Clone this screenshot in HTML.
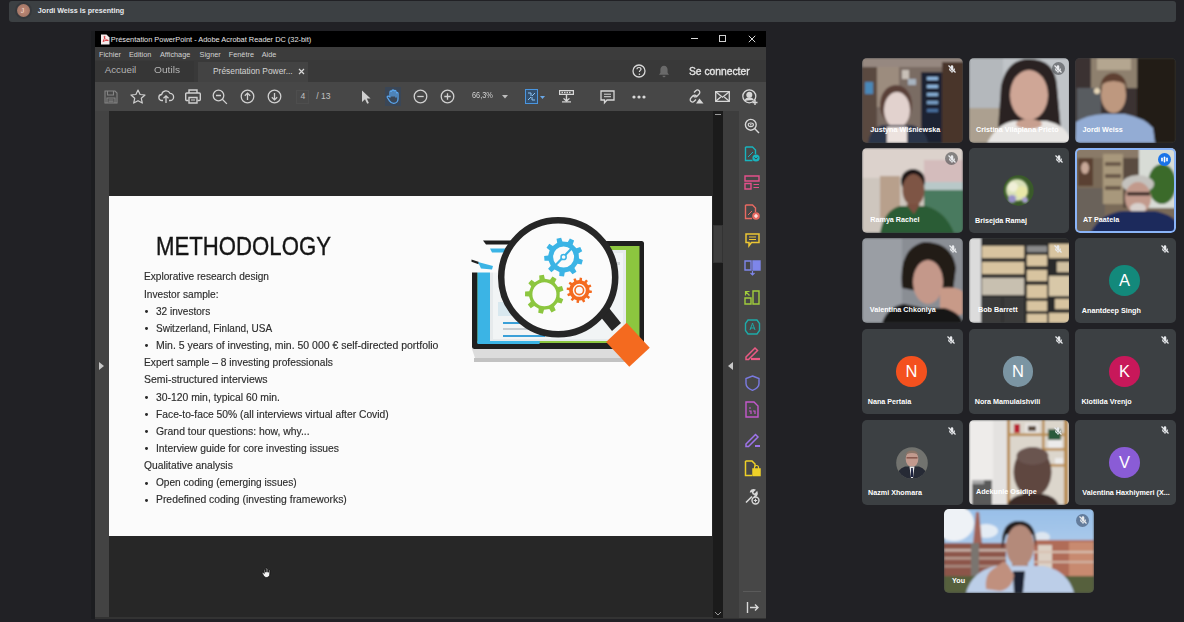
<!DOCTYPE html>
<html><head><meta charset="utf-8">
<style>
*{margin:0;padding:0;box-sizing:border-box}
html,body{width:1184px;height:622px;overflow:hidden;background:#212125;font-family:"Liberation Sans",sans-serif;position:relative}
.a{position:absolute}
.t{position:absolute;white-space:nowrap;line-height:1;transform-origin:0 50%}
.st{color:#2c2c2c;font-size:10.6px;-webkit-text-stroke:0.15px #2c2c2c}
.mt{color:#d2d2d2;font-size:8px}
.tile{position:absolute;width:101px;height:85px;background:#3c4043;border-radius:5px;overflow:hidden}
.nm{position:absolute;color:#fff;font-size:7.2px;font-weight:bold;white-space:nowrap;line-height:1}
.av{position:absolute;border-radius:50%;color:#fff;text-align:center}
svg{position:absolute;overflow:visible}
</style></head><body>
<!-- banner -->
<div class="a" style="left:9px;top:1px;width:1167px;height:21px;background:#3c4043;border-radius:3px"></div>
<!-- ACROBAT WINDOW -->
<div class="a" style="left:95px;top:31px;width:671px;height:16px;background:#000"></div>
<div class="a" style="left:95px;top:47px;width:671px;height:13px;background:#3c3c3c"></div>
<div class="a" style="left:95px;top:60px;width:671px;height:22px;background:#393939"></div>
<div class="a" style="left:95px;top:60.5px;width:98.5px;height:21px;background:#363636"></div>
<div class="a" style="left:198px;top:61.5px;width:110px;height:20.5px;background:#434343"></div>
<div class="a" style="left:95px;top:82px;width:671px;height:29px;background:#474747"></div>
<div class="a" style="left:91px;top:31px;width:4px;height:588px;background:#1c1d20"></div>
<div class="a" style="left:95px;top:111px;width:14px;height:507px;background:#434343"></div>
<div class="a" style="left:109px;top:111px;width:604px;height:507px;background:#272727"></div>
<div class="a" style="left:95px;top:617px;width:671px;height:2px;background:#333"></div>
<div class="a" style="left:713px;top:111px;width:10px;height:507px;background:#1b1b1b"></div>
<div class="a" style="left:723px;top:111px;width:16px;height:507px;background:#3d3d3d"></div>
<div class="a" style="left:739px;top:111px;width:27px;height:507px;background:#474747"></div>
<!-- slide -->
<div class="a" style="left:108.5px;top:195.8px;width:603.5px;height:339.9px;background:#fbfbfb"></div>
<div class="t" style="left:156px;top:233.8px;font-size:25px;color:#151515;-webkit-text-stroke:0.35px #151515;transform:scaleX(0.887)">METHODOLOGY</div>
<div class="t st" style="left:144.4px;top:271.40px;transform:scaleX(0.956)">Explorative research design</div>
<div class="t st" style="left:144.4px;top:288.56px;transform:scaleX(0.959)">Investor sample:</div>
<div class="a" style="left:145.2px;top:310.14px;width:2.9px;height:2.9px;border-radius:50%;background:#2a2a2a"></div>
<div class="t st" style="left:156.0px;top:305.72px;transform:scaleX(0.948)">32 investors</div>
<div class="a" style="left:145.2px;top:327.30px;width:2.9px;height:2.9px;border-radius:50%;background:#2a2a2a"></div>
<div class="t st" style="left:156.0px;top:322.88px;transform:scaleX(0.944)">Switzerland, Finland, USA</div>
<div class="a" style="left:145.2px;top:344.46px;width:2.9px;height:2.9px;border-radius:50%;background:#2a2a2a"></div>
<div class="t st" style="left:156.0px;top:340.04px;transform:scaleX(0.989)">Min. 5 years of investing, min. 50 000 € self-directed portfolio</div>
<div class="t st" style="left:144.4px;top:357.20px;transform:scaleX(0.966)">Expert sample – 8 investing professionals</div>
<div class="t st" style="left:144.4px;top:374.36px;transform:scaleX(0.990)">Semi-structured interviews</div>
<div class="a" style="left:145.2px;top:395.94px;width:2.9px;height:2.9px;border-radius:50%;background:#2a2a2a"></div>
<div class="t st" style="left:156.0px;top:391.52px;transform:scaleX(0.979)">30-120 min, typical 60 min.</div>
<div class="a" style="left:145.2px;top:413.10px;width:2.9px;height:2.9px;border-radius:50%;background:#2a2a2a"></div>
<div class="t st" style="left:156.0px;top:408.68px;transform:scaleX(0.971)">Face-to-face 50% (all interviews virtual after Covid)</div>
<div class="a" style="left:145.2px;top:430.26px;width:2.9px;height:2.9px;border-radius:50%;background:#2a2a2a"></div>
<div class="t st" style="left:156.0px;top:425.84px;transform:scaleX(0.982)">Grand tour questions: how, why...</div>
<div class="a" style="left:145.2px;top:447.42px;width:2.9px;height:2.9px;border-radius:50%;background:#2a2a2a"></div>
<div class="t st" style="left:156.0px;top:443.00px;transform:scaleX(0.974)">Interview guide for core investing issues</div>
<div class="t st" style="left:144.4px;top:460.16px;transform:scaleX(0.973)">Qualitative analysis</div>
<div class="a" style="left:145.2px;top:481.74px;width:2.9px;height:2.9px;border-radius:50%;background:#2a2a2a"></div>
<div class="t st" style="left:156.0px;top:477.32px;transform:scaleX(0.955)">Open coding (emerging issues)</div>
<div class="a" style="left:145.2px;top:498.90px;width:2.9px;height:2.9px;border-radius:50%;background:#2a2a2a"></div>
<div class="t st" style="left:156.0px;top:494.48px;transform:scaleX(0.979)">Predefined coding (investing frameworks)</div>

<!--ILLUS--><svg width="1184" height="622" style="left:0;top:0" viewBox="0 0 1184 622">
<path d="M472 349 L633 349 L631 358 Q552 365 475 358 Z" fill="#dcdcdc"/>
<rect x="474" y="358" width="156" height="4" fill="#c2c2c2"/>
<rect x="472" y="241" width="172" height="108" rx="2.5" fill="#1f1f1f"/>
<rect x="477.5" y="246" width="162" height="97" fill="#8cc63f"/>
<rect x="477.5" y="246" width="62" height="97" fill="#3bb4e5"/>
<rect x="477.5" y="341" width="62" height="3" fill="#3bb4e5"/>
<rect x="490" y="250" width="136" height="91" fill="#e6eaec"/>
<rect x="493" y="253" width="130" height="86" fill="#f1f4f5"/>
<rect x="498" y="262" width="122" height="3" fill="#d3d8da"/>
<rect x="498" y="302" width="108" height="14" fill="#d8e8ef"/>
<rect x="503" y="322" width="42" height="2" fill="#3aa0d8"/>
<rect x="503" y="328" width="56" height="2" fill="#c6ccd0"/>
<rect x="503" y="335" width="42" height="2" fill="#3aa0d8"/>
<path d="M465 236 H515 L503 272.5 H465Z" fill="#fbfbfb"/>
<path d="M483 240.5 H512 V244.5 H486 Z" fill="#1f1f1f"/>
<path d="M490 248.5 H508 L506 252.5 H492Z" fill="#3bb4e5"/>
<path d="M471.5 259.5 L479 262 L478.5 264.3 L471.5 261.7Z" fill="#1f1f1f"/>
<path d="M478 262 L493 266 L492 269.5 L481 268.5Z" fill="#3bb4e5"/>
<path d="M597.5 313 L607 305.5 L621 323 L612 331Z" fill="#262626"/>
<g transform="translate(627.9 344.8) rotate(47)"><rect x="-17" y="-14" width="34" height="28" fill="#f46a1f"/></g>
<circle cx="558.2" cy="277.3" r="57" fill="#fbfbfb" stroke="#262626" stroke-width="6.5"/>
<path fill-rule="evenodd" fill="#3bb4e5" d="M579.02 258.55 L582.87 259.96 L581.59 264.53 L577.56 263.73 L574.42 268.10 L574.42 268.10 L576.46 271.66 L572.53 274.33 L569.97 271.13 L564.76 272.46 L564.75 272.46 L564.03 276.50 L559.30 276.02 L559.40 271.92 L554.55 269.58 L554.55 269.58 L551.40 272.21 L548.08 268.81 L550.79 265.73 L548.58 260.82 L548.58 260.82 L544.48 260.81 L544.12 256.07 L548.18 255.45 L549.64 250.27 L549.64 250.27 L546.50 247.63 L549.28 243.77 L552.78 245.90 L557.23 242.87 L557.23 242.87 L556.53 238.83 L561.13 237.66 L562.45 241.54 L567.80 242.08 L567.80 242.08 L569.86 238.53 L574.14 240.60 L572.65 244.42 L576.41 248.27 L576.41 248.27 L580.27 246.88 L582.22 251.21 L578.62 253.18 L579.02 258.55ZM553.10 257.00 a10.50 10.50 0 1 0 21.00 0 a10.50 10.50 0 1 0 -21.00 0Z"/>
<path fill="none" stroke="#3bb4e5" stroke-width="2.2" d="M555.2 265.6 L571.5 248.5"/>
<circle cx="563.6" cy="257" r="2.6" fill="#fbfbfb" stroke="#3bb4e5" stroke-width="1.5"/>
<path fill-rule="evenodd" fill="#8cc63f" d="M559.59 297.38 L563.28 299.17 L561.54 303.59 L557.62 302.39 L554.06 306.42 L554.06 306.42 L555.74 310.17 L551.56 312.44 L549.33 309.00 L544.01 309.80 L544.01 309.79 L542.88 313.74 L538.23 312.80 L538.73 308.73 L534.14 305.92 L534.14 305.92 L530.74 308.22 L527.78 304.50 L530.78 301.71 L529.07 296.60 L529.07 296.60 L524.99 296.18 L525.11 291.43 L529.21 291.22 L531.18 286.21 L531.18 286.21 L528.32 283.27 L531.47 279.70 L534.74 282.18 L539.47 279.60 L539.47 279.60 L539.18 275.51 L543.88 274.81 L544.79 278.81 L550.07 279.87 L550.07 279.87 L552.47 276.55 L556.53 279.03 L554.66 282.68 L558.02 286.89 L558.02 286.89 L561.99 285.89 L563.51 290.40 L559.73 292.00 L559.59 297.38ZM532.40 294.30 a12.00 12.00 0 1 0 24.00 0 a12.00 12.00 0 1 0 -24.00 0Z"/>
<path fill-rule="evenodd" fill="#f46a1f" d="M589.50 290.30 L591.99 290.80 L591.69 293.10 L589.15 292.94 L588.13 295.40 L588.13 295.40 L590.04 297.08 L588.63 298.92 L586.51 297.51 L584.40 299.13 L584.40 299.13 L585.21 301.54 L583.07 302.43 L581.94 300.15 L579.30 300.50 L579.30 300.50 L578.80 302.99 L576.50 302.69 L576.66 300.15 L574.20 299.13 L574.20 299.13 L572.52 301.04 L570.68 299.63 L572.09 297.51 L570.47 295.40 L570.47 295.40 L568.06 296.21 L567.17 294.07 L569.45 292.94 L569.10 290.30 L569.10 290.30 L566.61 289.80 L566.91 287.50 L569.45 287.66 L570.47 285.20 L570.47 285.20 L568.56 283.52 L569.97 281.68 L572.09 283.09 L574.20 281.47 L574.20 281.47 L573.39 279.06 L575.53 278.17 L576.66 280.45 L579.30 280.10 L579.30 280.10 L579.80 277.61 L582.10 277.91 L581.94 280.45 L584.40 281.47 L584.40 281.47 L586.08 279.56 L587.92 280.97 L586.51 283.09 L588.13 285.20 L588.13 285.20 L590.54 284.39 L591.43 286.53 L589.15 287.66 L589.50 290.30ZM572.80 290.30 a6.50 6.50 0 1 0 13.00 0 a6.50 6.50 0 1 0 -13.00 0Z"/>
<circle cx="579.3" cy="290.3" r="4.3" fill="none" stroke="#f46a1f" stroke-width="1.6"/>
</svg><!--/ILLUS-->
<!--CHROME--><!-- banner content -->
<div class="a" style="left:14.7px;top:2.4px;width:17px;height:17px;border-radius:50%;background:#35383c"></div><div class="a" style="left:16.7px;top:4.4px;width:13px;height:13px;border-radius:50%;background:radial-gradient(circle,#c08a78,#9a7060)"></div>
<div class="t" style="left:20.8px;top:7.2px;font-size:7px;color:#f4dcd4">J</div>
<div class="t" style="left:37.8px;top:8.1px;font-size:7.15px;font-weight:bold;color:#e8eaed">Jordi Weiss is presenting</div>
<!-- title bar -->
<svg width="10" height="11" style="left:99.5px;top:33.5px" viewBox="0 0 10 11"><path d="M1 0.5h5.5l3 3v7h-8.5z" fill="#f5ecec"/><path d="M3 7.5c1-2 2-4 1.8-5.2-.3-.8-1 .2-.3 1.5.6 1.3 2 2.6 3.3 2.8 1 .1.6-.6-.5-.5C5.8 6.3 4 7 3 7.5z" fill="none" stroke="#d2232a" stroke-width=".8"/></svg>
<div class="t" style="left:110.8px;top:35.7px;font-size:7.4px;color:#e6e6e6">Présentation PowerPoint - Adobe Acrobat Reader DC (32-bit)</div>
<div class="a" style="left:690.5px;top:37.8px;width:7.5px;height:1px;background:#d8d8d8"></div>
<div class="a" style="left:719px;top:35.2px;width:7px;height:6.5px;border:1px solid #d0d0d0"></div>
<svg width="8" height="8" style="left:747.5px;top:34.5px" viewBox="0 0 8 8"><path d="M.8.8l6.4 6.4M7.2.8L.8 7.2" stroke="#d8d8d8" stroke-width="1"/></svg>
<!-- menu -->
<div class="t mt" style="left:99px;top:50.5px;font-size:7.3px">Fichier</div>
<div class="t mt" style="left:129px;top:50.5px;font-size:7.3px">Edition</div>
<div class="t mt" style="left:160px;top:50.5px;font-size:7.3px">Affichage</div>
<div class="t mt" style="left:199.6px;top:50.5px;font-size:7.3px">Signer</div>
<div class="t mt" style="left:228.8px;top:50.5px;font-size:7.3px">Fenêtre</div>
<div class="t mt" style="left:261.7px;top:50.5px;font-size:7.3px">Aide</div>
<!-- tabs -->
<div class="t" style="left:104.7px;top:65.3px;font-size:9.8px;color:#b4b4b4">Accueil</div>
<div class="t" style="left:154px;top:65.3px;font-size:9.8px;color:#b4b4b4;transform:scaleX(1.04)">Outils</div>
<div class="t" style="left:213px;top:66.5px;font-size:8.4px;color:#d4d4d4">Présentation Power...</div>
<svg width="7" height="7" style="left:297.5px;top:67.5px" viewBox="0 0 7 7"><path d="M1 1l5 5M6 1L1 6" stroke="#d8d8d8" stroke-width="1.2"/></svg>
<svg width="14" height="14" style="left:631.7px;top:64.4px" viewBox="0 0 14 14"><circle cx="7" cy="7" r="6" fill="none" stroke="#d8d8d8" stroke-width="1.3"/><path d="M5 5.3c0-1.2.9-1.8 2-1.8s2 .7 2 1.7c0 1.2-1.6 1.3-1.6 2.8" fill="none" stroke="#d8d8d8" stroke-width="1.2"/><circle cx="7.4" cy="10.3" r=".8" fill="#d8d8d8"/></svg>
<svg width="12" height="13" style="left:657.7px;top:65px" viewBox="0 0 12 13"><path d="M6 .8c-2.3 0-3.6 1.8-3.6 4v3L1 9.8h10L9.6 7.8v-3C9.6 2.6 8.3.8 6 .8zM4.5 10.8a1.5 1.5 0 0 0 3 0z" fill="#6a6a6a"/></svg>
<div class="t" style="left:689px;top:66.5px;font-size:10.4px;color:#e4e4e4;-webkit-text-stroke:0.35px #e4e4e4;transform:scaleX(0.99)">Se connecter</div>
<!-- toolbar icons -->
<svg width="14" height="14" style="left:103.5px;top:89.5px" viewBox="0 0 14 14" fill="none" stroke="#858585" stroke-width="1.1"><path d="M1 1h10l2 2v10H1z"/><path d="M3.5 1v4h6V1M3 13V8h8v5M4.5 10h5M4.5 11.8h5"/></svg>
<svg width="16" height="15" style="left:130px;top:89px" viewBox="0 0 16 15" fill="none" stroke="#d0d0d0" stroke-width="1.2" stroke-linejoin="round"><path d="M8 1l2.1 4.5 4.9.5-3.7 3.3 1 4.8L8 11.7 3.7 14.1l1-4.8L1 6l4.9-.5z"/></svg>
<svg width="16" height="15" style="left:157.7px;top:89px" viewBox="0 0 16 15" fill="none" stroke="#d0d0d0" stroke-width="1.3"><path d="M5 11.5H4a3 3 0 0 1-.3-6A4.4 4.4 0 0 1 12 4.3a3.6 3.6 0 0 1 0 7.2h-1"/><path d="M8 14V7M5.5 9.3L8 6.8l2.5 2.5"/></svg>
<svg width="16" height="15" style="left:184.5px;top:89px" viewBox="0 0 16 15" fill="none" stroke="#d0d0d0" stroke-width="1.4"><path d="M4 4V1h8v3"/><path d="M3.5 11.5H1.7a1 1 0 0 1-1-1V5a1 1 0 0 1 1-1h12.6a1 1 0 0 1 1 1v5.5a1 1 0 0 1-1 1h-1.8"/><path d="M4 8.5h8v5.5H4z"/><path d="M6 11h4" stroke-width="1"/></svg>
<svg width="16" height="16" style="left:212px;top:89px" viewBox="0 0 16 16" fill="none" stroke="#d0d0d0" stroke-width="1.3"><circle cx="6.5" cy="6.5" r="5.3"/><path d="M10.3 10.3l4.6 4.6M4 6.5h5"/></svg>
<svg width="15" height="15" style="left:240px;top:89.3px" viewBox="0 0 15 15" fill="none" stroke="#d0d0d0" stroke-width="1.3"><circle cx="7.5" cy="7.5" r="6.3"/><path d="M7.5 11V4.3M4.8 6.8l2.7-2.7 2.7 2.7"/></svg>
<svg width="15" height="15" style="left:267.2px;top:89.3px" viewBox="0 0 15 15" fill="none" stroke="#d0d0d0" stroke-width="1.3"><circle cx="7.5" cy="7.5" r="6.3"/><path d="M7.5 4v6.7M4.8 8.2l2.7 2.7 2.7-2.7"/></svg>
<div class="a" style="left:296px;top:89.5px;width:13px;height:14px;background:#484848;border:1px solid #4e4e4e"></div>
<div class="t" style="left:300.5px;top:92.2px;font-size:8.6px;color:#c0c0c0">4</div>
<div class="t" style="left:316.3px;top:92.2px;font-size:8.6px;color:#c0c0c0">/ 13</div>
<svg width="10" height="14" style="left:360.5px;top:89.5px" viewBox="0 0 10 14"><path d="M1 .5v11.5l3-2.8 2.2 4.5 1.7-.8-2.1-4.4H9.6z" fill="#cfcfcf"/></svg>
<div class="a" style="left:384.5px;top:87px;width:16px;height:19px;background:#3a4656"></div>
<svg width="14" height="15" style="left:385.5px;top:89px" viewBox="0 0 14 15" fill="none" stroke="#5aa6ee" stroke-width="1.3" stroke-linejoin="round"><path d="M4 8V3a1 1 0 0 1 2 0v4V2a1 1 0 0 1 2 0v5V2.5a1 1 0 0 1 2 0V8V4.5a1 1 0 0 1 2 0V10c0 2.5-2 4.3-4.3 4.3-2 0-3-.8-4.2-2.5L1.3 8.5a1 1 0 0 1 1.5-1.2z"/></svg>
<svg width="15" height="15" style="left:412.5px;top:89.3px" viewBox="0 0 15 15" fill="none" stroke="#d0d0d0" stroke-width="1.3"><circle cx="7.5" cy="7.5" r="6.3"/><path d="M4.3 7.5h6.4"/></svg>
<svg width="15" height="15" style="left:439.7px;top:89.3px" viewBox="0 0 15 15" fill="none" stroke="#d0d0d0" stroke-width="1.3"><circle cx="7.5" cy="7.5" r="6.3"/><path d="M4.3 7.5h6.4M7.5 4.3v6.4"/></svg>
<div class="t" style="left:471.6px;top:92.3px;font-size:8.2px;color:#d2d2d2;transform:scaleX(0.9)">66,3%</div>
<svg width="6" height="4" style="left:501.5px;top:95px" viewBox="0 0 6 4"><path d="M0 0h6L3 3.5z" fill="#bdbdbd"/></svg>
<div class="a" style="left:524.5px;top:88.5px;width:13px;height:15px;background:#34506e;border:1.3px solid #4a96e0"></div>
<svg width="9" height="9" style="left:526.5px;top:91.5px" viewBox="0 0 9 9" fill="none" stroke="#8cc4f4" stroke-width="1"><path d="M1 1h3v3M8 8H5V5M1 8l3-3M8 1L5 4"/></svg>
<svg width="5" height="3" style="left:540px;top:96px" viewBox="0 0 5 3"><path d="M0 0h5L2.5 3z" fill="#6aa8e8"/></svg>
<svg width="15" height="13" style="left:558.5px;top:90px" viewBox="0 0 15 13" fill="#d8d8d8"><path d="M0 0h15v5H0zm1.2 1.2v2.6h12.6V1.2z"/><path d="M2.5 1.8h1.5v1.4H2.5zM5 1.8h1.5v1.4H5zM7.5 1.8h1.5v1.4H7.5zM10 1.8h1.5v1.4H10z"/><path d="M6.8 5h1.4v4.5l1.8-1.6.9.9-3.4 3.2-3.4-3.2.9-.9 1.8 1.6z"/><path d="M3 11.3h9v1.2H3z"/></svg>
<svg width="15" height="14" style="left:599.5px;top:89.5px" viewBox="0 0 15 14" fill="none" stroke="#d8d8d8" stroke-width="1.3"><path d="M1 1h13v9H7l-2.5 2.8V10H1z"/><path d="M4 4.2h7M4 6.7h7" stroke-width="1"/></svg>
<svg width="14" height="4" style="left:631.5px;top:94.5px" viewBox="0 0 14 4" fill="#d8d8d8"><circle cx="2" cy="2" r="1.6"/><circle cx="7" cy="2" r="1.6"/><circle cx="12" cy="2" r="1.6"/></svg>
<svg width="17" height="15" style="left:686.5px;top:89px" viewBox="0 0 17 15" fill="none" stroke="#d8d8d8" stroke-width="1.3"><path d="M7 3.5l1.8-1.8a2.3 2.3 0 0 1 3.3 3.3L10 7.2a2.3 2.3 0 0 1-3.3 0M9 10.5l-1.8 1.8a2.3 2.3 0 0 1-3.3-3.3L6 6.8a2.3 2.3 0 0 1 3.3 0"/><path d="M9 14.5l3.5-5 4 5z" fill="#d8d8d8" stroke="none"/></svg>
<svg width="15" height="11" style="left:714.5px;top:90.5px" viewBox="0 0 15 11" fill="none" stroke="#d8d8d8" stroke-width="1.3"><path d="M.7.7h13.6v9.6H.7z"/><path d="M.7.7l6.8 5.5 6.8-5.5M.7 10.3l5-4.2M14.3 10.3l-5-4.2"/></svg>
<svg width="16" height="16" style="left:742px;top:88.5px" viewBox="0 0 16 16" fill="none" stroke="#d8d8d8" stroke-width="1.3"><circle cx="7.3" cy="7.3" r="6.5"/><circle cx="7.3" cy="5.8" r="2.4" fill="#d8d8d8"/><path d="M3 11.8c1-2 2.5-2.8 4.3-2.8s3 .7 4 2" fill="#d8d8d8"/><path d="M13 11v5M10.5 13.5h5" stroke-width="1.4"/></svg>
<!-- doc scrollbar -->
<div class="a" style="left:715px;top:114px;width:6px;height:4px;border-top:1.5px solid #9a9a9a"></div>
<div class="a" style="left:713px;top:225px;width:10px;height:38px;background:#3e3e3e;border:1px solid #333"></div>
<svg width="6" height="4" style="left:715px;top:612px" viewBox="0 0 6 4"><path d="M0 0l3 3 3-3" fill="none" stroke="#9a9a9a" stroke-width="1"/></svg>
<!-- left panel arrow -->
<svg width="5" height="8" style="left:99px;top:362px" viewBox="0 0 5 8"><path d="M0 0l5 4-5 4z" fill="#c8c8c8"/></svg>
<!-- right panel arrow -->
<svg width="5" height="8" style="left:727.5px;top:362px" viewBox="0 0 5 8"><path d="M5 0L0 4l5 4z" fill="#c8c8c8"/></svg>
<svg width="11" height="11" style="left:261px;top:567px" viewBox="0 0 11 11"><path d="M3.2 6.5V3a.7.7 0 0 1 1.4 0v2.2V1.8a.7.7 0 0 1 1.4 0v3.4V2.3a.7.7 0 0 1 1.4 0v3V3.4a.7.7 0 0 1 1.4 0V7c0 2-1.4 3.5-3.2 3.5-1.4 0-2.2-.6-3-1.8L1.3 6.4a.7.7 0 0 1 1.1-.9z" fill="#f4f4f4" stroke="#000" stroke-width=".7"/></svg><!--/CHROME-->
<!--RPANEL--><!-- right panel icons -->
<svg width="16" height="16" style="left:744px;top:117.5px" viewBox="0 0 16 16" fill="none" stroke="#d8d8d8" stroke-width="1.4"><circle cx="6.8" cy="6.8" r="5.4"/><path d="M10.6 10.6l4.4 4.4"/><ellipse cx="6.8" cy="6.8" rx="2.6" ry="1.8" stroke-width="1.1"/><circle cx="6.8" cy="6.8" r=".8" fill="#d8d8d8" stroke="none"/></svg>
<svg width="16" height="16" style="left:744px;top:146px" viewBox="0 0 16 16" fill="none" stroke="#19b4be" stroke-width="1.4"><path d="M1.5 1h7l3 3v4.2M8.5 14.5h-7V1"/><path d="M4 11l5-5" stroke-width="1"/><circle cx="12" cy="12" r="3.6" fill="#19b4be" stroke="none"/><path d="M10.3 11.5l1.7 1.6 1.7-1.6" stroke="#3f3f3f" stroke-width="1"/></svg>
<svg width="16" height="15" style="left:744px;top:175px" viewBox="0 0 16 15" fill="none" stroke="#e4508a" stroke-width="1.4"><path d="M1 1h14v5H1zM1 8.5h6v5.5H1z"/><path d="M9.5 9.5h5.5M9.5 12.5h5.5" stroke-width="1.1"/></svg>
<svg width="16" height="16" style="left:744px;top:203.5px" viewBox="0 0 16 16" fill="none" stroke="#e86a62" stroke-width="1.4"><path d="M1.5 1h7l3 3v4M8 14.5H1.5V1"/><path d="M4 11l4-4" stroke-width="1"/><circle cx="12" cy="12" r="3.8" fill="#e86a62" stroke="none"/><path d="M12 10v4M10 12h4" stroke="#fff" stroke-width="1.1"/></svg>
<svg width="15" height="14" style="left:744.5px;top:233px" viewBox="0 0 15 14" fill="none" stroke="#ecc634" stroke-width="1.5"><path d="M1 1h13v8.5H6.5L4 12.8V9.5H1z"/><path d="M4 4h7M4 6.5h7" stroke-width="1.2"/></svg>
<svg width="17" height="16" style="left:743.5px;top:260px" viewBox="0 0 17 16" fill="none" stroke="#7e86ea" stroke-width="1.4"><path d="M1 1h6v9H1z"/><path d="M9 1h7v9H9z" fill="#7e86ea"/><path d="M8.5 11v4M6.5 13l2 2 2-2" stroke-width="1.2"/></svg>
<svg width="16" height="15" style="left:744px;top:289.5px" viewBox="0 0 16 15" fill="none" stroke="#a0cc3c" stroke-width="1.4"><path d="M9 1h6v13H9zM1 8h6v6H1z"/><path d="M1.5 1.5l4 4M1.5 5.5v-4h4" stroke-width="1.2"/></svg>
<svg width="17" height="16" style="left:743.5px;top:318.5px" viewBox="0 0 17 16" fill="none" stroke="#1eaaa8" stroke-width="1.4"><path d="M4 1h9l2.5 3.5v7L13 15H4l-2.5-3.5v-7z"/><path d="M6 11c1-3 2-5 2.5-7 .5 2 1.5 4 2.5 7M6.5 9h4" stroke-width="1"/></svg>
<svg width="17" height="14" style="left:743.5px;top:346px" viewBox="0 0 17 14" fill="none" stroke="#ec5a84" stroke-width="1.5"><path d="M2 11L11 2l2.5 2.5-9 9H2z"/><path d="M7 13h9" stroke-width="2.2"/></svg>
<svg width="15" height="16" style="left:744.5px;top:375px" viewBox="0 0 15 16" fill="none" stroke="#7a7ae0" stroke-width="1.4"><path d="M7.5 1L14 3.5v5c0 3-3 5.5-6.5 6.8C4 14 1 11.5 1 8.5v-5z"/></svg>
<svg width="14" height="17" style="left:745px;top:400.5px" viewBox="0 0 14 17" fill="none" stroke="#c458cc" stroke-width="1.4"><path d="M1 1h8l4 4v11H1z"/><path d="M4 7h2M4 10h2v3M8 10h2v3" stroke-width="1.2"/></svg>
<svg width="17" height="15" style="left:743.5px;top:432px" viewBox="0 0 17 15" fill="none" stroke="#9e74ea" stroke-width="1.5"><path d="M2 12L11.5 2.5 14 5l-9.5 9.5H2z"/><path d="M11 14h5" stroke-width="2"/></svg>
<svg width="17" height="17" style="left:743.5px;top:460px" viewBox="0 0 17 17" fill="none" stroke="#eed028" stroke-width="1.5"><path d="M1.5 1h6.5l3 3v2.5M8 15.5H1.5V1"/><path d="M9 9h7v6.5H9z" fill="#eed028"/><path d="M10.5 9V7.5a2 2 0 0 1 4 0V9" stroke-width="1.2"/></svg>
<svg width="16" height="16" style="left:744px;top:489px" viewBox="0 0 16 16" fill="none" stroke="#d8d8d8" stroke-width="1.6"><path d="M2 13.5l6-6M6.5 3.5a3 3 0 0 1 4-2.5L8.5 3l.8 1.8 1.8.6 1.8-2a3 3 0 0 1-3 4"/><circle cx="11.5" cy="11.5" r="3.5" stroke-width="1.4"/><path d="M11.5 9.8v3.4M9.8 11.5h3.4" stroke-width="1.1"/></svg>
<div class="a" style="left:743px;top:591px;width:18px;height:1px;background:#5a5a5a"></div>
<svg width="13" height="11" style="left:746px;top:601.5px" viewBox="0 0 13 11" fill="none" stroke="#d8d8d8" stroke-width="1.4"><path d="M1.5 0v11M4 5.5h8M9 2.5l3 3-3 3"/></svg>
<!--/RPANEL--><!--TILES--><div class="tile" style="left:862.0px;top:58.0px;width:100.5px;height:84.5px;"><svg width="100.5" height="84.5" style="left:0;top:0" viewBox="0 0 100.5 84.5"><defs><filter id="b0" x="-20%" y="-20%" width="140%" height="140%"><feGaussianBlur stdDeviation="1.1"/></filter></defs><g filter="url(#b0)"><rect width="101" height="85" fill="#7a6c64"/>
<rect x="0" y="0" width="101" height="9" fill="#968880"/>
<rect x="0" y="9" width="15" height="76" fill="#5a4a40"/>
<rect x="3" y="24" width="8" height="12" fill="#4a88b8"/>
<rect x="15" y="9" width="22" height="40" fill="#9c8c7e"/>
<rect x="40" y="12" width="7" height="9" fill="#c8c0b8"/>
<rect x="46" y="21" width="8" height="6" fill="#a8b4c0"/>
<rect x="59" y="14" width="21" height="71" fill="#1c2030"/>
<rect x="65" y="19" width="11" height="3" fill="#90b8e0"/><rect x="65" y="27" width="11" height="3" fill="#90b8e0"/><rect x="65" y="35" width="11" height="3" fill="#88b0d8"/><rect x="65" y="43" width="11" height="3" fill="#7aa0c8"/><rect x="65" y="51" width="11" height="3" fill="#4a70a0"/>
<rect x="80" y="4" width="21" height="81" fill="#4a362c"/>
<ellipse cx="34" cy="47" rx="16" ry="20" fill="#5a4038"/>
<ellipse cx="35" cy="52" rx="13" ry="18" fill="#e2d2ce"/>
<path d="M6 85 Q8 71 20 67 L50 67 Q64 71 66 85z" fill="#2c3448"/>
<rect x="25" y="69" width="20" height="16" fill="#ece2de"/></g></svg></div>
<div class="nm" style="left:870.3px;top:125.7px;transform:scaleX(1.000);transform-origin:0 0">Justyna Wiśniewska</div>
<svg width="10" height="10" style="left:946.5px;top:63.5px" viewBox="0 0 10 10" fill="none" stroke="#e8eaed" stroke-width="1.1"><path d="M5 1.2a1.3 1.3 0 0 1 1.3 1.3v2.3a1.3 1.3 0 0 1-2.6 0V2.5A1.3 1.3 0 0 1 5 1.2z" fill="#e8eaed" stroke="none"/><path d="M2.6 4.6c0 1.5 1.1 2.6 2.4 2.6s2.4-1.1 2.4-2.6M5 7.2v1.6"/><path d="M1.5 1.5l7 7" stroke-width="1.2"/></svg>
<div class="tile" style="left:968.5px;top:58.0px;width:100.5px;height:84.5px;"><svg width="100.5" height="84.5" style="left:0;top:0" viewBox="0 0 100.5 84.5"><defs><filter id="b3" x="-20%" y="-20%" width="140%" height="140%"><feGaussianBlur stdDeviation="1.1"/></filter></defs><g filter="url(#b3)"><rect width="101" height="85" fill="#c0c4c8"/>
<rect x="0" y="0" width="34" height="85" fill="#b4b8bc"/>
<rect x="0" y="50" width="36" height="35" fill="#aca090"/>
<path d="M28 85 L32 28 Q38 1 60 1 Q86 1 88 28 L92 72 L80 85z" fill="#2a2220"/>
<ellipse cx="60" cy="37" rx="19" ry="25" fill="#cfa696"/>
<path d="M18 85 Q28 66 44 63 L78 63 Q96 67 101 80 L101 85z" fill="#e8e6e4"/>
<ellipse cx="60" cy="66" rx="13" ry="5" fill="#c8a090"/></g></svg></div>
<div class="nm" style="left:976.0px;top:125.7px;transform:scaleX(1.000);transform-origin:0 0">Cristina Vilaplana Prieto</div>
<div class="a" style="left:1051.5px;top:62.0px;width:13px;height:13px;border-radius:50%;background:rgba(60,64,67,.55)"></div><svg width="10" height="10" style="left:1053.0px;top:63.5px" viewBox="0 0 10 10" fill="none" stroke="#e8eaed" stroke-width="1.1"><path d="M5 1.2a1.3 1.3 0 0 1 1.3 1.3v2.3a1.3 1.3 0 0 1-2.6 0V2.5A1.3 1.3 0 0 1 5 1.2z" fill="#e8eaed" stroke="none"/><path d="M2.6 4.6c0 1.5 1.1 2.6 2.4 2.6s2.4-1.1 2.4-2.6M5 7.2v1.6"/><path d="M1.5 1.5l7 7" stroke-width="1.2"/></svg>
<div class="tile" style="left:1075.0px;top:58.0px;width:100.5px;height:84.5px;"><svg width="100.5" height="84.5" style="left:0;top:0" viewBox="0 0 100.5 84.5"><defs><filter id="b6" x="-20%" y="-20%" width="140%" height="140%"><feGaussianBlur stdDeviation="1.1"/></filter></defs><g filter="url(#b6)"><rect width="101" height="85" fill="#2a2220"/>
<rect x="0" y="0" width="62" height="85" fill="#3a3230"/>
<rect x="16" y="0" width="46" height="30" fill="#8e806e"/>
<rect x="22" y="0" width="34" height="12" fill="#b4a690"/>
<rect x="2" y="30" width="24" height="55" fill="#585c60"/>
<circle cx="22" cy="33" r="3" fill="#e8d8b8"/>
<rect x="62" y="0" width="39" height="85" fill="#221a18"/>
<ellipse cx="38.5" cy="37" rx="12.5" ry="18" fill="#be987f"/>
<path d="M25 36 Q24 16 38.5 15 Q53 16 52 36 L50 26 Q38.5 20 27 26z" fill="#5e4030"/>
<path d="M0 85 L1 64 Q12 57 28 56 L50 56 Q70 60 78 70 L80 85z" fill="#93acd4"/></g></svg></div>
<div class="nm" style="left:1082.5px;top:125.7px;transform:scaleX(1.000);transform-origin:0 0">Jordi Weiss</div>
<div class="tile" style="left:862.0px;top:148.2px;width:100.5px;height:84.5px;"><svg width="100.5" height="84.5" style="left:0;top:0" viewBox="0 0 100.5 84.5"><defs><filter id="b8" x="-20%" y="-20%" width="140%" height="140%"><feGaussianBlur stdDeviation="1.1"/></filter></defs><g filter="url(#b8)"><rect width="101" height="85" fill="#cec6be"/>
<rect x="0" y="0" width="101" height="30" fill="#dcd2cc"/>
<rect x="62" y="12" width="39" height="22" fill="#d4bcbc"/>
<rect x="62" y="34" width="39" height="51" fill="#4a7a5e"/>
<rect x="62" y="34" width="39" height="8" fill="#b8c8c8"/>
<rect x="18" y="28" width="20" height="42" fill="#b8a08c"/>
<ellipse cx="51" cy="33" rx="12" ry="12" fill="#1a1414"/>
<ellipse cx="51.5" cy="42" rx="11" ry="16" fill="#7e5444"/>
<path d="M18 85 Q22 62 38 58 L64 58 Q84 64 92 85z" fill="#2c5c34"/>
<path d="M44 56 L58 56 L52 66z" fill="#7a5040"/></g></svg></div>
<div class="nm" style="left:870.3px;top:215.9px;transform:scaleX(1.000);transform-origin:0 0">Ramya Rachel</div>
<div class="a" style="left:945.0px;top:152.2px;width:13px;height:13px;border-radius:50%;background:rgba(60,64,67,.55)"></div><svg width="10" height="10" style="left:946.5px;top:153.7px" viewBox="0 0 10 10" fill="none" stroke="#e8eaed" stroke-width="1.1"><path d="M5 1.2a1.3 1.3 0 0 1 1.3 1.3v2.3a1.3 1.3 0 0 1-2.6 0V2.5A1.3 1.3 0 0 1 5 1.2z" fill="#e8eaed" stroke="none"/><path d="M2.6 4.6c0 1.5 1.1 2.6 2.4 2.6s2.4-1.1 2.4-2.6M5 7.2v1.6"/><path d="M1.5 1.5l7 7" stroke-width="1.2"/></svg>
<div class="tile" style="left:968.5px;top:148.2px;width:100.5px;height:84.5px;"></div>
<svg width="31" height="31" style="left:1003.2px;top:174.7px" viewBox="0 0 31 31"><defs><clipPath id="cb"><circle cx="15.5" cy="15.5" r="15.2"/></clipPath><filter id="bb"><feGaussianBlur stdDeviation="1"/></filter></defs><g clip-path="url(#cb)"><rect width="31" height="31" fill="#3a5a2a"/><g filter="url(#bb)"><circle cx="14" cy="15" r="11" fill="#d8e0b8"/><circle cx="10" cy="12" r="5" fill="#f0f0d8"/><circle cx="19" cy="17" r="6" fill="#e8e8a8"/><circle cx="9" cy="24" r="4" fill="#9890c8"/><circle cx="22" cy="25" r="3" fill="#a8a0d0"/></g></g></svg>
<div class="nm" style="left:975.0px;top:217.2px;transform:scaleX(1.000);transform-origin:0 0">Brisejda Ramaj</div>
<svg width="10" height="10" style="left:1054.0px;top:154.2px" viewBox="0 0 10 10" fill="none" stroke="#e8eaed" stroke-width="1.1"><path d="M5 1.2a1.3 1.3 0 0 1 1.3 1.3v2.3a1.3 1.3 0 0 1-2.6 0V2.5A1.3 1.3 0 0 1 5 1.2z" fill="#e8eaed" stroke="none"/><path d="M2.6 4.6c0 1.5 1.1 2.6 2.4 2.6s2.4-1.1 2.4-2.6M5 7.2v1.6"/><path d="M1.5 1.5l7 7" stroke-width="1.2"/></svg>
<div class="tile" style="left:1075.0px;top:148.2px;width:100.5px;height:84.5px;"><svg width="100.5" height="84.5" style="left:0;top:0" viewBox="0 0 100.5 84.5"><defs><filter id="b15" x="-20%" y="-20%" width="140%" height="140%"><feGaussianBlur stdDeviation="1.1"/></filter></defs><g filter="url(#b15)"><rect width="101" height="85" fill="#7a6a58"/>
<rect x="0" y="0" width="101" height="10" fill="#8a7a68"/>
<rect x="3" y="10" width="15" height="28" fill="#5a4030"/>
<ellipse cx="10" cy="20" rx="4" ry="6" fill="#c8a898"/>
<rect x="0" y="40" width="30" height="45" fill="#6a625a"/>
<rect x="28" y="6" width="20" height="50" fill="#a8987c"/>
<rect x="30" y="14" width="16" height="4" fill="#6a5a48"/><rect x="30" y="26" width="16" height="4" fill="#6a5a48"/><rect x="30" y="38" width="16" height="4" fill="#6a5a48"/>
<rect x="48" y="10" width="17" height="50" fill="#5a4c40"/>
<rect x="64" y="0" width="37" height="60" fill="#d8dcd6"/>
<ellipse cx="87" cy="36" rx="14" ry="20" fill="#3a6a2a"/>
<ellipse cx="63" cy="36" rx="16" ry="9" fill="#c4c2be"/>
<ellipse cx="63" cy="50" rx="13" ry="16" fill="#c29a8c"/>
<rect x="52" y="44" width="23" height="3.5" fill="#3a2a28"/>
<ellipse cx="63" cy="60" rx="8" ry="5" fill="#d8d0cc"/>
<path d="M15 85 Q26 65 48 63 L80 63 Q98 67 101 74 L101 85z" fill="#1f2c5c"/></g></svg><div class="a" style="left:0;top:0;right:0;bottom:0;border:2px solid #8ab4f8;border-radius:5px"></div></div>
<div class="nm" style="left:1083.0px;top:215.9px;transform:scaleX(1.000);transform-origin:0 0">AT Paatela</div>
<div class="a" style="left:1158.3px;top:152.7px;width:13px;height:13px;border-radius:50%;background:#1a73e8"></div>
<svg width="13" height="13" style="left:1158.3px;top:152.7px" viewBox="0 0 13 13" fill="#fff"><rect x="3.2" y="4.5" width="1.6" height="4" rx=".8"/><rect x="5.7" y="3.5" width="1.6" height="6" rx=".8"/><rect x="8.2" y="4.5" width="1.6" height="4" rx=".8"/></svg>
<div class="tile" style="left:862.0px;top:238.3px;width:100.5px;height:84.5px;"><svg width="100.5" height="84.5" style="left:0;top:0" viewBox="0 0 100.5 84.5"><defs><filter id="b19" x="-20%" y="-20%" width="140%" height="140%"><feGaussianBlur stdDeviation="1.1"/></filter></defs><g filter="url(#b19)"><rect width="101" height="85" fill="#8a8e94"/>
<rect x="0" y="0" width="40" height="85" fill="#9a9ea4"/>
<path d="M40 50 Q36 10 62 4 Q90 4 94 30 L90 60z" fill="#221a18"/>
<ellipse cx="66" cy="44" rx="15" ry="22" fill="#c4988a"/>
<path d="M78 50 Q96 48 101 54 L101 76 Q88 80 78 70z" fill="#c89a88"/>
<path d="M20 85 Q26 68 42 66 L62 70 L82 70 Q98 74 101 85z" fill="#171414"/></g></svg></div>
<div class="nm" style="left:869.8px;top:306.0px;transform:scaleX(1.000);transform-origin:0 0">Valentina Chkoniya</div>
<svg width="10" height="10" style="left:947.5px;top:244.3px" viewBox="0 0 10 10" fill="none" stroke="#e8eaed" stroke-width="1.1"><path d="M5 1.2a1.3 1.3 0 0 1 1.3 1.3v2.3a1.3 1.3 0 0 1-2.6 0V2.5A1.3 1.3 0 0 1 5 1.2z" fill="#e8eaed" stroke="none"/><path d="M2.6 4.6c0 1.5 1.1 2.6 2.4 2.6s2.4-1.1 2.4-2.6M5 7.2v1.6"/><path d="M1.5 1.5l7 7" stroke-width="1.2"/></svg>
<div class="tile" style="left:968.5px;top:238.3px;width:100.5px;height:84.5px;"><svg width="100.5" height="84.5" style="left:0;top:0" viewBox="0 0 100.5 84.5"><defs><filter id="b22" x="-20%" y="-20%" width="140%" height="140%"><feGaussianBlur stdDeviation="1.1"/></filter></defs><g filter="url(#b22)"><rect width="101" height="85" fill="#2a2a2a"/>
<rect x="0" y="0" width="12" height="85" fill="#dcdcdc"/>
<rect x="13" y="8" width="42" height="12" fill="#d8c4a0"/>
<rect x="13" y="24" width="42" height="12" fill="#d8c4a0"/>
<rect x="13" y="40" width="42" height="17" fill="#c8c0b0"/>
<rect x="13" y="59" width="42" height="26" fill="#3a3a3a"/>
<rect x="33" y="59" width="1" height="26" fill="#222"/>
<rect x="58" y="8" width="20" height="6" fill="#8a8a8a"/>
<rect x="58" y="17" width="20" height="11" fill="#d8c4a0"/>
<rect x="58" y="32" width="20" height="11" fill="#d8c4a0"/>
<rect x="58" y="47" width="20" height="13" fill="#d8c4a0"/>
<rect x="58" y="63" width="20" height="10" fill="#d8c4a0"/>
<rect x="58" y="76" width="20" height="9" fill="#d8c4a0"/>
<rect x="80" y="6" width="21" height="14" fill="#d8c4a0"/>
<rect x="88" y="24" width="13" height="10" fill="#d0c0a0"/>
<rect x="80" y="38" width="21" height="20" fill="#d8c8a8"/>
<rect x="86" y="61" width="15" height="10" fill="#d8c4a0"/>
<rect x="80" y="75" width="21" height="10" fill="#d8c4a0"/></g></svg></div>
<div class="nm" style="left:978.0px;top:306.0px;transform:scaleX(1.000);transform-origin:0 0">Bob Barrett</div>
<svg width="10" height="10" style="left:1053.3px;top:244.3px" viewBox="0 0 10 10" fill="none" stroke="#e8eaed" stroke-width="1.1"><path d="M5 1.2a1.3 1.3 0 0 1 1.3 1.3v2.3a1.3 1.3 0 0 1-2.6 0V2.5A1.3 1.3 0 0 1 5 1.2z" fill="#e8eaed" stroke="none"/><path d="M2.6 4.6c0 1.5 1.1 2.6 2.4 2.6s2.4-1.1 2.4-2.6M5 7.2v1.6"/><path d="M1.5 1.5l7 7" stroke-width="1.2"/></svg>
<div class="tile" style="left:1075.0px;top:238.3px;width:100.5px;height:84.5px;"></div><div class="av" style="left:1109.2px;top:265.3px;width:30.6px;height:30.6px;background:#13897b"></div><div class="t" style="left:1109.2px;top:272.0px;width:30.6px;text-align:center;font-size:16.5px;color:#fff">A</div>
<div class="nm" style="left:1081.8px;top:307.3px;transform:scaleX(1.000);transform-origin:0 0">Anantdeep Singh</div>
<svg width="10" height="10" style="left:1160.0px;top:244.3px" viewBox="0 0 10 10" fill="none" stroke="#e8eaed" stroke-width="1.1"><path d="M5 1.2a1.3 1.3 0 0 1 1.3 1.3v2.3a1.3 1.3 0 0 1-2.6 0V2.5A1.3 1.3 0 0 1 5 1.2z" fill="#e8eaed" stroke="none"/><path d="M2.6 4.6c0 1.5 1.1 2.6 2.4 2.6s2.4-1.1 2.4-2.6M5 7.2v1.6"/><path d="M1.5 1.5l7 7" stroke-width="1.2"/></svg>
<div class="tile" style="left:862.0px;top:329.2px;width:100.5px;height:84.5px;"></div><div class="av" style="left:896.2px;top:356.2px;width:30.6px;height:30.6px;background:#f4511e"></div><div class="t" style="left:896.2px;top:362.9px;width:30.6px;text-align:center;font-size:16.5px;color:#fff">N</div>
<div class="nm" style="left:867.7px;top:398.2px;transform:scaleX(1.000);transform-origin:0 0">Nana Pertaia</div>
<svg width="10" height="10" style="left:946.0px;top:335.2px" viewBox="0 0 10 10" fill="none" stroke="#e8eaed" stroke-width="1.1"><path d="M5 1.2a1.3 1.3 0 0 1 1.3 1.3v2.3a1.3 1.3 0 0 1-2.6 0V2.5A1.3 1.3 0 0 1 5 1.2z" fill="#e8eaed" stroke="none"/><path d="M2.6 4.6c0 1.5 1.1 2.6 2.4 2.6s2.4-1.1 2.4-2.6M5 7.2v1.6"/><path d="M1.5 1.5l7 7" stroke-width="1.2"/></svg>
<div class="tile" style="left:968.5px;top:329.2px;width:100.5px;height:84.5px;"></div><div class="av" style="left:1002.7px;top:356.2px;width:30.6px;height:30.6px;background:#7b95a3"></div><div class="t" style="left:1002.7px;top:362.9px;width:30.6px;text-align:center;font-size:16.5px;color:#fff">N</div>
<div class="nm" style="left:974.7px;top:398.2px;transform:scaleX(1.000);transform-origin:0 0">Nora Mamulaishvili</div>
<svg width="10" height="10" style="left:1053.7px;top:335.2px" viewBox="0 0 10 10" fill="none" stroke="#e8eaed" stroke-width="1.1"><path d="M5 1.2a1.3 1.3 0 0 1 1.3 1.3v2.3a1.3 1.3 0 0 1-2.6 0V2.5A1.3 1.3 0 0 1 5 1.2z" fill="#e8eaed" stroke="none"/><path d="M2.6 4.6c0 1.5 1.1 2.6 2.4 2.6s2.4-1.1 2.4-2.6M5 7.2v1.6"/><path d="M1.5 1.5l7 7" stroke-width="1.2"/></svg>
<div class="tile" style="left:1075.0px;top:329.2px;width:100.5px;height:84.5px;"></div><div class="av" style="left:1109.2px;top:356.2px;width:30.6px;height:30.6px;background:#c8185a"></div><div class="t" style="left:1109.2px;top:362.9px;width:30.6px;text-align:center;font-size:16.5px;color:#fff">K</div>
<div class="nm" style="left:1081.4px;top:398.2px;transform:scaleX(1.000);transform-origin:0 0">Klotilda Vrenjo</div>
<svg width="10" height="10" style="left:1160.0px;top:335.2px" viewBox="0 0 10 10" fill="none" stroke="#e8eaed" stroke-width="1.1"><path d="M5 1.2a1.3 1.3 0 0 1 1.3 1.3v2.3a1.3 1.3 0 0 1-2.6 0V2.5A1.3 1.3 0 0 1 5 1.2z" fill="#e8eaed" stroke="none"/><path d="M2.6 4.6c0 1.5 1.1 2.6 2.4 2.6s2.4-1.1 2.4-2.6M5 7.2v1.6"/><path d="M1.5 1.5l7 7" stroke-width="1.2"/></svg>
<div class="tile" style="left:862.0px;top:420.0px;width:100.5px;height:84.5px;"></div>
<svg width="32" height="32" style="left:895.8px;top:447.3px" viewBox="0 0 32 32"><defs><clipPath id="cn"><circle cx="16" cy="16" r="15.8"/></clipPath><filter id="bn"><feGaussianBlur stdDeviation=".7"/></filter></defs><g clip-path="url(#cn)"><rect width="32" height="32" fill="#72736f"/><g filter="url(#bn)"><ellipse cx="16" cy="12" rx="6.3" ry="8" fill="#c29a8e"/><path d="M9.5 9 Q10 3.5 16 3.5 Q22 3.5 22.5 9 L21 7 Q16 5 11 7z" fill="#8a7468"/><rect x="10.5" y="10" width="11" height="1.6" fill="#8a5a50"/><path d="M0 32 Q1 22 9 19.5 L23 19.5 Q31 22 32 32z" fill="#262a34"/><path d="M13.5 19.5 L18.5 19.5 L17 31 L15 31z" fill="#e6e6e6"/><path d="M15.2 21 L16.8 21 L17.2 30 L14.8 30z" fill="#1a2040"/></g></g></svg>
<div class="nm" style="left:868.0px;top:489.0px;transform:scaleX(1.000);transform-origin:0 0">Nazmi Xhomara</div>
<svg width="10" height="10" style="left:946.5px;top:426.0px" viewBox="0 0 10 10" fill="none" stroke="#e8eaed" stroke-width="1.1"><path d="M5 1.2a1.3 1.3 0 0 1 1.3 1.3v2.3a1.3 1.3 0 0 1-2.6 0V2.5A1.3 1.3 0 0 1 5 1.2z" fill="#e8eaed" stroke="none"/><path d="M2.6 4.6c0 1.5 1.1 2.6 2.4 2.6s2.4-1.1 2.4-2.6M5 7.2v1.6"/><path d="M1.5 1.5l7 7" stroke-width="1.2"/></svg>
<div class="tile" style="left:968.5px;top:420.0px;width:100.5px;height:84.5px;"><svg width="100.5" height="84.5" style="left:0;top:0" viewBox="0 0 100.5 84.5"><defs><filter id="b41" x="-20%" y="-20%" width="140%" height="140%"><feGaussianBlur stdDeviation="1.1"/></filter></defs><g filter="url(#b41)"><rect width="101" height="85" fill="#e4e2e0"/>
<rect x="0" y="0" width="24" height="85" fill="#eeecea"/>
<rect x="38" y="0" width="63" height="85" fill="#dcd6cc"/>
<rect x="38" y="0" width="3" height="85" fill="#b88c50"/>
<rect x="73" y="0" width="2.5" height="45" fill="#b88c50"/>
<rect x="95" y="0" width="4" height="85" fill="#b88c50"/>
<rect x="41" y="13.5" width="54" height="2.5" fill="#b88c50"/>
<rect x="75" y="28" width="20" height="2.5" fill="#b88c50"/>
<rect x="75" y="44" width="20" height="2.5" fill="#b88c50"/>
<rect x="45" y="4" width="6" height="9" fill="#b82030"/>
<rect x="56" y="3" width="14" height="10" fill="#e8e4e0"/><rect x="59" y="6" width="8" height="5" fill="#5a4a3a"/>
<rect x="79" y="9" width="13" height="12" fill="#2a5a3a"/>
<rect x="79" y="20" width="14" height="8" fill="#ecebea"/>
<rect x="86" y="38" width="8" height="6" fill="#ecebea"/>
<rect x="3" y="60" width="20" height="25" fill="#5a5a5a"/>
<rect x="3" y="60" width="12" height="4" fill="#a8a8a8"/>
<ellipse cx="63.5" cy="52" rx="19" ry="25" fill="#5e4640"/>
<ellipse cx="63.5" cy="36" rx="16" ry="9" fill="#6a5450"/>
<path d="M38 85 Q42 76 54 74 L74 74 Q86 76 90 85z" fill="#3a2a28"/></g></svg></div>
<div class="nm" style="left:976.0px;top:487.7px;transform:scaleX(1.000);transform-origin:0 0">Adekunle Osidipe</div>
<svg width="10" height="10" style="left:1053.0px;top:426.0px" viewBox="0 0 10 10" fill="none" stroke="#e8eaed" stroke-width="1.1"><path d="M5 1.2a1.3 1.3 0 0 1 1.3 1.3v2.3a1.3 1.3 0 0 1-2.6 0V2.5A1.3 1.3 0 0 1 5 1.2z" fill="#e8eaed" stroke="none"/><path d="M2.6 4.6c0 1.5 1.1 2.6 2.4 2.6s2.4-1.1 2.4-2.6M5 7.2v1.6"/><path d="M1.5 1.5l7 7" stroke-width="1.2"/></svg>
<div class="tile" style="left:1075.0px;top:420.0px;width:100.5px;height:84.5px;"></div><div class="av" style="left:1109.2px;top:447.0px;width:30.6px;height:30.6px;background:#8a5cd6"></div><div class="t" style="left:1109.2px;top:453.7px;width:30.6px;text-align:center;font-size:16.5px;color:#fff">V</div>
<div class="nm" style="left:1082.3px;top:489.0px;transform:scaleX(1.000);transform-origin:0 0">Valentina Haxhiymeri (X...</div>
<svg width="10" height="10" style="left:1159.8px;top:424.5px" viewBox="0 0 10 10" fill="none" stroke="#e8eaed" stroke-width="1.1"><path d="M5 1.2a1.3 1.3 0 0 1 1.3 1.3v2.3a1.3 1.3 0 0 1-2.6 0V2.5A1.3 1.3 0 0 1 5 1.2z" fill="#e8eaed" stroke="none"/><path d="M2.6 4.6c0 1.5 1.1 2.6 2.4 2.6s2.4-1.1 2.4-2.6M5 7.2v1.6"/><path d="M1.5 1.5l7 7" stroke-width="1.2"/></svg>
<div class="tile" style="left:944.0px;top:509.3px;width:149.5px;height:84.0px;"><svg width="149.5" height="84.0" style="left:0;top:0" viewBox="0 0 149.5 84.0"><defs><filter id="b47" x="-20%" y="-20%" width="140%" height="140%"><feGaussianBlur stdDeviation="1.1"/></filter></defs><g filter="url(#b47)"><defs><linearGradient id="sky" x1="0" y1="0" x2="0" y2="1"><stop offset="0" stop-color="#98bfe8"/><stop offset="1" stop-color="#c4d8ee"/></linearGradient></defs>
<rect width="150" height="84" fill="url(#sky)"/>
<ellipse cx="10" cy="14" rx="20" ry="18" fill="#eef2f6"/>
<ellipse cx="42" cy="22" rx="12" ry="7" fill="#e4ecf4"/>
<ellipse cx="98" cy="28" rx="8" ry="5" fill="#dde6f0"/>
<path d="M32 3 L35 3 L38 35 L29 35z" fill="#a06458"/>
<rect x="0" y="34" width="62" height="34" fill="#8c5448"/>
<rect x="0" y="40" width="62" height="2.5" fill="#c8b4aa"/>
<rect x="0" y="48" width="62" height="2.5" fill="#b89c90"/>
<rect x="0" y="56" width="62" height="2.5" fill="#a88a80"/>
<rect x="27" y="34" width="8" height="34" fill="#7a7470"/>
<rect x="90" y="31" width="60" height="37" fill="#b06c58"/>
<rect x="94" y="36" width="14" height="32" fill="#dcd0c4"/>
<rect x="125" y="33" width="25" height="35" fill="#c88a70"/>
<rect x="90" y="42" width="60" height="2" fill="#d8c0b0"/>
<rect x="90" y="52" width="60" height="2" fill="#d0b4a4"/>
<rect x="0" y="67" width="150" height="17" fill="#56603e"/>
<path d="M58 40 Q56 12 75 12 Q93 12 92 38 L89 26 Q76 19 62 26z" fill="#241c1c"/>
<rect x="68" y="48" width="16" height="14" fill="#a88070"/><ellipse cx="76" cy="37" rx="14" ry="21" fill="#b48a7a"/>
<path d="M22 84 Q28 62 52 57 L100 57 Q124 62 130 84z" fill="#bccee8"/>
<path d="M69 62 L81 62 L79 84 L70 84z" fill="#1c2232"/>
<path d="M42 80 Q40 64 52 58 L60 52 L64 56 L70 66 Q68 80 56 82z" fill="#c0907e"/></g></svg></div>
<div class="nm" style="left:952.0px;top:577.0px;transform:scaleX(1.000);transform-origin:0 0">You</div>
<div class="a" style="left:1076.0px;top:513.8px;width:13px;height:13px;border-radius:50%;background:rgba(80,100,130,.75)"></div>
<svg width="10" height="10" style="left:1077.5px;top:515.3px" viewBox="0 0 10 10" fill="none" stroke="#e8eaed" stroke-width="1.1"><path d="M5 1.2a1.3 1.3 0 0 1 1.3 1.3v2.3a1.3 1.3 0 0 1-2.6 0V2.5A1.3 1.3 0 0 1 5 1.2z" fill="#e8eaed" stroke="none"/><path d="M2.6 4.6c0 1.5 1.1 2.6 2.4 2.6s2.4-1.1 2.4-2.6M5 7.2v1.6"/><path d="M1.5 1.5l7 7" stroke-width="1.2"/></svg><!--/TILES-->
</body></html>
